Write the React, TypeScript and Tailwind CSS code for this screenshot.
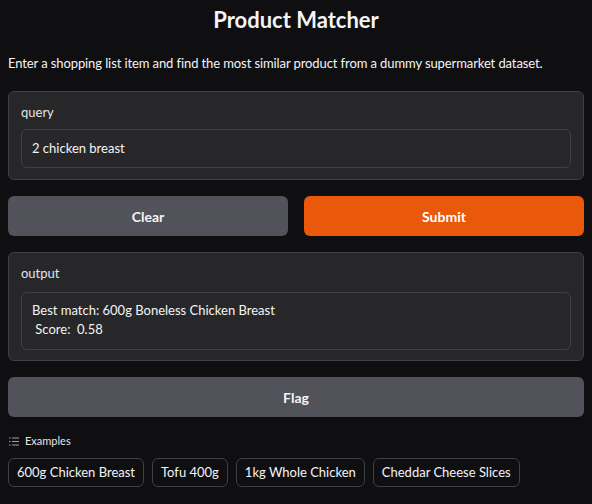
import { useState } from "react";

const examples = ["600g Chicken Breast", "Tofu 400g", "1kg Whole Chicken", "Cheddar Cheese Slices"];

export default function App() {
  const [query, setQuery] = useState("2 chicken breast");

  return (
    <div
      className="min-h-screen bg-[#0f0f11] px-2 pt-1.5 text-[#f4f4f5]"
      style={{ fontFamily: '"Source Sans Pro", Lato, "Noto Sans", sans-serif' }}
    >
      <h1 className="text-center text-[22px] font-bold leading-[28px]">Product Matcher</h1>
      <p className="mt-[20px] text-[13px] leading-[19px] tracking-[-0.1px]">
        Enter a shopping list item and find the most similar product from a dummy supermarket dataset.
      </p>

      <div className="mt-[18px] flex flex-col gap-4">
        {/* query */}
        <div className="rounded-md border border-[#3f3f46] bg-[#27272a] px-3 pb-[11px] pt-[10px]">
          <div className="text-[13px] leading-[20px] text-[#e4e4e7]">query</div>
          <input
            className="mt-[7px] block w-full rounded-md border border-[#3f3f46] bg-[#27272a] px-[10px] py-[9px] text-[13px] leading-[19px] text-[#f4f4f5] outline-none"
            value={query}
            onChange={(e) => setQuery(e.target.value)}
          />
        </div>

        {/* buttons */}
        <div className="flex gap-4">
          <button className="h-10 flex-1 rounded-md bg-[#52525b] text-[14px] font-bold text-[#f4f4f5]">Clear</button>
          <button className="h-10 flex-1 rounded-md bg-[#ea580c] text-[14px] font-bold text-white">Submit</button>
        </div>

        {/* output */}
        <div className="rounded-md border border-[#3f3f46] bg-[#27272a] px-3 pb-[10px] pt-[10px]">
          <div className="text-[13px] leading-[20px] text-[#e4e4e7]">output</div>
          <div className="mt-[9px] whitespace-pre-wrap rounded-md border border-[#3f3f46] bg-[#27272a] px-[10px] pb-[10px] pt-[8px] text-[13px] leading-[19px] text-[#f4f4f5]">
            {"Best match: 600g Boneless Chicken Breast\n Score:  0.58"}
          </div>
        </div>

        <button className="h-10 w-full rounded-md bg-[#52525b] text-[14px] font-bold text-[#f4f4f5]">Flag</button>
      </div>

      {/* examples */}
      <div className="mt-[16px] flex items-center gap-[6px] pl-px text-[11px] leading-[16px] text-[#e4e4e7]">
        <svg width="10" height="9" viewBox="0 0 10 9" fill="none" stroke="#a1a1aa" strokeWidth="1">
          <path d="M0 1h1.5M3 1h7M0 4.5h1.5M3 4.5h7M0 8h1.5M3 8h7" />
        </svg>
        Examples
      </div>
      <div className="mt-[9px] flex flex-wrap gap-[8px]">
        {examples.map((ex) => (
          <button
            key={ex}
            className="rounded-md border border-[#3f3f46] bg-[#0f0f11] px-2 py-[4px] text-[13px] leading-[19px] text-[#f4f4f5]"
          >
            {ex}
          </button>
        ))}
      </div>
    </div>
  );
}
